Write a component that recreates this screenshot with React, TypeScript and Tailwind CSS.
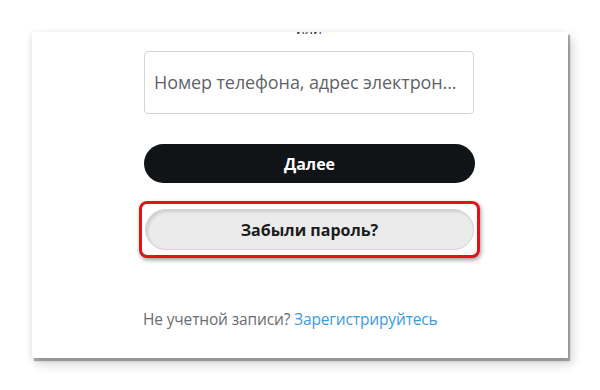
import React from 'react';

const font = { fontFamily: '"Open Sans", "Noto Sans", sans-serif' };

export default function App() {
  return (
    <div className="w-[600px] h-[390px] bg-white overflow-hidden pt-[32px] pl-[32px]" style={font}>
      <div className="w-[536px] h-[326px] bg-white overflow-hidden shadow-[2px_3px_1px_rgba(0,0,0,0.3),4px_6px_10px_rgba(0,0,0,0.18),-2px_0_6px_rgba(0,0,0,0.06)]">
        <div className="pl-[112px] w-[442px]">
          <div className="-mt-[10px] h-[14px] text-center text-[14px] leading-[14px] text-[#333]">или</div>

          <div className="mt-[15px] h-[63px] w-[330px] rounded-[4px] border border-[#cfd6da] flex items-center pl-[9px] pr-[10px]">
            <span className="text-[18px] text-[#5f6469] whitespace-nowrap overflow-hidden tracking-[-0.1px]">
              Номер телефона, адрес электрон...
            </span>
          </div>

          <button className="mt-[30px] h-[39px] w-[331px] rounded-full bg-[#111417] text-white text-[16px] font-bold flex items-center justify-center">
            Далее
          </button>

          <div className="mt-[18px] -ml-[5px] w-[341px] h-[57px] rounded-[8px] border-[3px] border-[#e3121a] bg-white p-[3px] pt-[5px] shadow-[1px_2px_4px_rgba(0,0,0,0.4)]">
            <button className="w-full h-[41px] rounded-full bg-[#ebebeb] border border-[#d2d2d2] shadow-[inset_2px_2px_3px_rgba(0,0,0,0.12)] text-[16px] font-bold text-[#1c1c1c] flex items-center justify-center">
              Забыли пароль?
            </button>
          </div>

          <div className="mt-[51px] -ml-[1px] text-[15.5px] leading-[20px] whitespace-nowrap tracking-[-0.15px]">
            <span className="text-[#6a6e72]">Не учетной записи? </span>
            <span className="text-[#3a9be6]">Зарегистрируйтесь</span>
          </div>
        </div>
      </div>
    </div>
  );
}
